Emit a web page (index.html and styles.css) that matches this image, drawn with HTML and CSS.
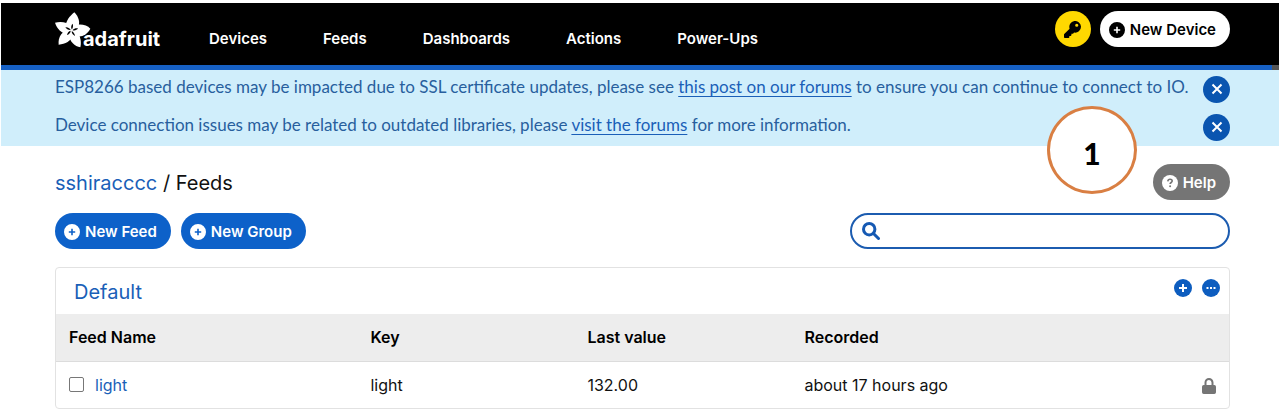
FILE: index.html
```html
<!DOCTYPE html>
<html lang="en">
<head>
<meta charset="utf-8">
<title>Feeds - Adafruit IO</title>
<meta name="viewport" content="width=device-width, initial-scale=1">
<link rel="stylesheet" href="styles.css">
</head>
<body>
<svg class="defs" aria-hidden="true">
  <symbol id="plus-circle" viewBox="0 0 16 16"><path fill-rule="evenodd" d="M8 0a8 8 0 1 0 0 16A8 8 0 0 0 8 0ZM7.200 4.800h1.600v2.400h2.400v1.600H8.800v2.400H7.200V8.800H4.800V7.200h2.400Z"/></symbol>
</svg>
<header class="topbar">
  <a class="logo" href="#">
    <svg class="flower" viewBox="165 35 108 108" aria-hidden="true">
      <g fill="#fff">
        <path d="M223 36C236 49 243 69 232 84L214 91 196 80C198 62 208 48 223 36Z"/>
        <path d="M165 67C181 62 203 65 212 76L215 92 202 103C184 98 171 85 165 67Z"/>
        <path d="M271 85C261 103 243 113 227 106L214 90 226 74C244 70 261 74 271 85Z"/>
        <path d="M176 133C174 113 182 97 199 91L215 90 220 105C213 122 196 132 176 133Z"/>
        <path d="M241 141C224 138 209 123 208 106L215 90 231 94C241 106 245 124 241 141Z"/>
      </g>
      <g fill="#000">
        <path d="M215 87C212 80 214 74 218 70 220 76 219 82 216 87Z"/>
        <path d="M211 89C204 89 199 86 196 81 203 80 208 83 212 88Z"/>
        <path d="M218 89C222 84 228 83 234 84 231 89 225 92 218 90Z"/>
        <path d="M212 92C211 98 207 103 201 104 202 98 205 94 211 91Z"/>
        <path d="M216 93C221 96 224 101 225 107 219 104 215 99 215 93Z"/>
      </g>
    </svg>
    <span class="wordmark">adafruit</span>
  </a>
  <nav class="nav">
    <a href="#">Devices</a><a href="#">Feeds</a><a href="#">Dashboards</a><a href="#">Actions</a><a href="#">Power-Ups</a>
  </nav>
  <div class="actions">
    <button class="key" aria-label="Show key">
      <svg viewBox="0 0 512 512" aria-hidden="true"><path d="M512 176a176 176 0 0 1-209 173l-24 27a24 24 0 0 1-18 8h-37v40a24 24 0 0 1-24 24h-40v40a24 24 0 0 1-24 24H24a24 24 0 0 1-24-24v-78c0-6 3-12 7-17l162-162A176 176 0 1 1 512 176ZM336 128a48 48 0 1 0 96 0 48 48 0 0 0-96 0Z"/></svg>
    </button>
    <button class="pill pill-white"><svg aria-hidden="true"><use href="#plus-circle"/></svg>New Device</button>
  </div>
</header>
<section class="notices">
  <div class="notice">
    <p>ESP8266 based devices may be impacted due to SSL certificate updates, please see <a href="#">this post on our forums</a> to ensure you can continue to connect to IO.</p>
    <button class="close" aria-label="Dismiss"><svg viewBox="0 0 12 12" aria-hidden="true"><path d="M1.500 1.500l9 9M10.500 1.500l-9 9"/></svg></button>
  </div>
  <div class="notice">
    <p>Device connection issues may be related to outdated libraries, please <a href="#">visit the forums</a> for more information.</p>
    <button class="close" aria-label="Dismiss"><svg viewBox="0 0 12 12" aria-hidden="true"><path d="M1.500 1.500l9 9M10.500 1.500l-9 9"/></svg></button>
  </div>
  <span class="marker">1</span>
</section>
<main class="main">
  <div class="row">
    <h1 class="crumbs"><a href="#">sshiracccc</a> / Feeds</h1>
    <button class="pill pill-gray"><svg viewBox="0 0 16 16" aria-hidden="true"><circle cx="8" cy="8" r="8"/><path class="hook" d="M5.800 6.300C6 4.900 6.900 4.300 8 4.300c1.300 0 2.200.8 2.200 1.800C10.200 7.500 8.200 7.500 8.100 9"/><circle class="dot" cx="8.100" cy="11.300" r="1"/></svg>Help</button>
  </div>
  <div class="row tools">
    <div class="buttons">
      <button class="pill pill-blue"><svg aria-hidden="true"><use href="#plus-circle"/></svg>New Feed</button>
      <button class="pill pill-blue"><svg aria-hidden="true"><use href="#plus-circle"/></svg>New Group</button>
    </div>
    <label class="search">
      <svg viewBox="0 0 18 18" aria-hidden="true"><circle cx="7.200" cy="7.200" r="5.700"/><path d="M11.500 11.500l5 5"/></svg>
      <input type="search" aria-label="Search feeds">
    </label>
  </div>
  <section class="card">
    <div class="card-head">
      <h2><a href="#">Default</a></h2>
      <div class="card-actions">
        <button class="round" aria-label="Add feed"><svg viewBox="0 0 18 18" aria-hidden="true"><path d="M9 5v8M5 9h8"/></svg></button>
        <button class="round" aria-label="More"><svg viewBox="0 0 18 18" aria-hidden="true"><path d="M4.500 9h2M8 9h2M11.500 9h2"/></svg></button>
      </div>
    </div>
    <table class="feeds">
      <thead><tr><th class="c-name">Feed Name</th><th class="c-mid">Key</th><th class="c-mid">Last value</th><th>Recorded</th><th class="c-lock" aria-label="Privacy"></th></tr></thead>
      <tbody><tr>
        <td><span class="pick"><input type="checkbox" aria-label="Select light"><a href="#">light</a></span></td>
        <td>light</td><td>132.00</td><td>about 17 hours ago</td>
        <td class="c-lock"><svg viewBox="0 0 14 16" role="img" aria-label="Private"><path fill-rule="evenodd" d="M2.500 7V4.500a4.500 4.500 0 0 1 9 0V7h.8A1.700 1.700 0 0 1 14 8.700v5.600a1.700 1.700 0 0 1-1.700 1.700H1.700A1.700 1.700 0 0 1 0 14.300V8.700A1.700 1.700 0 0 1 1.700 7ZM4.500 7h5V4.500a2.500 2.500 0 0 0-5 0Z"/></svg></td>
      </tr></tbody>
    </table>
  </section>
</main>
</body>
</html>
```
FILE: styles.css
```css
* { box-sizing: border-box; }
body {
  margin: 0;
  padding: 3px 3px 0 1px;
  background: #fff;
  color: #111;
  font: 16px/24px Inter, "Liberation Sans", sans-serif;
}
a { color: #1a5fb8; text-decoration: none; }
button { font: inherit; border: 0; padding: 0; cursor: pointer; }
h1, h2, p { margin: 0; font-weight: 400; }
.defs { position: absolute; width: 0; height: 0; }

.topbar {
  position: relative;
  display: flex;
  align-items: center;
  height: 67px;
  padding: 0 49px 0 54px;
  background: #000;
  border-bottom: 5px solid #1660c4;
}
.topbar::after {
  content: "";
  position: absolute;
  right: 0;
  bottom: -5px;
  width: 7px;
  height: 5px;
  background: #555;
}
.logo { display: flex; align-items: flex-end; width: 154px; padding-bottom: 8px; color: #fff; }
.flower { flex: none; width: 36px; height: 36px; margin-right: -8px; }
.wordmark { font-size: 20px; line-height: 18px; font-weight: 700; }
.nav { display: flex; gap: 56px; padding-top: 10px; }
.nav a { color: #fff; font-size: 15px; font-weight: 600; }
.actions { display: flex; gap: 9px; margin-left: auto; padding-bottom: 10px; }
.key {
  display: grid;
  place-items: center;
  width: 36px;
  height: 36px;
  border-radius: 50%;
  background: #ffd800;
}
.key svg { width: 17px; height: 17px; }

.pill {
  display: flex;
  align-items: center;
  gap: 5px;
  height: 36px;
  padding: 1px 14px 0 9px;
  border-radius: 18px;
  font-size: 15px;
  font-weight: 600;
  white-space: nowrap;
}
.pill svg { width: 16px; height: 16px; fill: currentColor; }
.pill-white { background: #fff; color: #000; }
.pill-blue { background: #0d61c9; color: #fff; }
.pill-gray { background: #757575; color: #fff; }
.pill-gray .hook { fill: none; stroke: #757575; stroke-width: 1.6; }
.pill-gray .dot { fill: #757575; }

.notices { position: relative; padding: 0 49px 0 54px; background: #d0eefb; color: #285f9e; }
.notice { display: flex; align-items: center; justify-content: space-between; height: 38px; }
.notice p { white-space: nowrap; padding-bottom: 4px; font-family: Lato, "Liberation Sans", sans-serif; font-size: 17px; }
.notice a { text-decoration: underline; text-underline-offset: 3px; }
.close { flex: none; display: grid; place-items: center; width: 27px; height: 27px; border-radius: 50%; background: #0a55b0; }
.close svg { width: 12px; height: 12px; fill: none; stroke: #fff; stroke-width: 2; }
.marker {
  position: absolute;
  top: 36px;
  right: 142px;
  display: grid;
  place-items: center;
  width: 90px;
  height: 88px;
  padding-top: 5px;
  border: 3px solid #d97f43;
  border-radius: 50%;
  background: #fff;
  color: #000;
  font: 900 30px/32px Lato, sans-serif;
}

.main { padding: 18px 49px 0 54px; }
.row { display: flex; align-items: center; justify-content: space-between; }
.crumbs { padding-top: 2px; font-size: 20px; line-height: 28px; }
.tools { margin-top: 13px; }
.buttons { display: flex; gap: 10px; }
.search {
  display: flex;
  align-items: center;
  width: 380px;
  height: 36px;
  padding: 0 10px;
  border: 2px solid #1c5cb0;
  border-radius: 18px;
}
.search svg { width: 18px; height: 18px; fill: none; stroke: #1559b3; stroke-width: 3; stroke-linecap: round; }
.search input { flex: 1; min-width: 0; border: 0; outline: 0; background: none; font: inherit; }

.card { margin-top: 18px; border: 1px solid #e2e2e2; border-radius: 4px; overflow: hidden; }
.card-head { display: flex; align-items: center; justify-content: space-between; height: 46px; padding: 0 9px 0 18px; }
.card-head h2 { font-size: 20px; line-height: 28px; padding-top: 2px; }
.card-actions { display: flex; gap: 10px; padding-bottom: 6px; }
.round { width: 18px; height: 18px; border-radius: 50%; background: #0d5dbf; }
.round svg { display: block; width: 18px; height: 18px; fill: none; stroke: #fff; stroke-width: 2; }
.feeds { width: 100%; border-collapse: collapse; table-layout: fixed; }
.feeds th, .feeds td { height: 47px; padding: 0 13px; text-align: left; }
.feeds th { background: #ededed; border-bottom: 1px solid #dcdcdc; font-weight: 600; color: #000; }
.feeds .c-name { width: 25.7%; }
.feeds .c-mid { width: 18.5%; }
.feeds .c-lock { width: 60px; text-align: right; }
.c-lock svg { width: 14px; height: 16px; fill: #757575; vertical-align: middle; }
.pick { display: flex; align-items: center; gap: 11px; }
.pick input {
  appearance: none;
  width: 15px;
  height: 15px;
  margin: 0;
  border: 1px solid #777;
  border-radius: 2px;
  background: #fff;
}
```
